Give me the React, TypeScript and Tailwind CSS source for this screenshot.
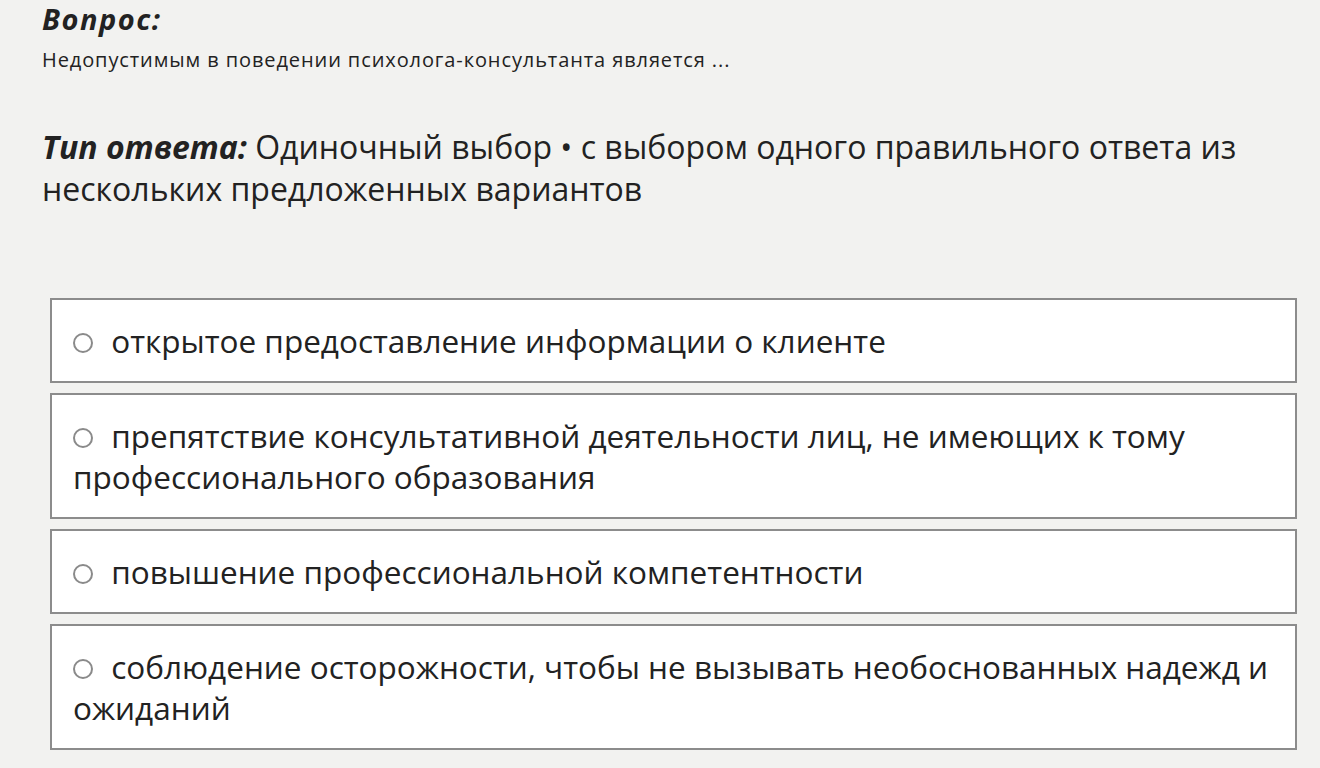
const options = [
  "открытое предоставление информации о клиенте",
  "препятствие консультативной деятельности лиц, не имеющих к тому профессионального образования",
  "повышение профессиональной компетентности",
  "соблюдение осторожности, чтобы не вызывать необоснованных надежд и ожиданий",
];

export default function App() {
  return (
    <div className="min-h-[768px] bg-[#f2f2f0] text-[#222] font-['Open_Sans','Noto_Sans',sans-serif]">
      <div className="px-[42px] pt-[1px]">
        <h1 className="text-[29px] leading-[36px] font-bold italic tracking-[1.5px]">Вопрос:</h1>
        <p className="mt-[11px] text-[20px] leading-[24px] tracking-[0.9px]">
          Недопустимым в поведении психолога-консультанта является ...
        </p>
        <p className="mt-[54px] text-[32px] leading-[42px]">
          <span className="font-bold italic">Тип ответа:</span> Одиночный выбор • с выбором одного
          правильного ответа из нескольких предложенных вариантов
        </p>
      </div>
      <div className="ml-[50px] mr-[23px] mt-[88px] flex flex-col gap-[10px]">
        {options.map((text) => (
          <label
            key={text}
            className="block border-2 border-[#8c8c8c] bg-white pl-[21px] pr-[14px] py-[20px] text-[31.5px] leading-[41px]"
          >
            <span className="mr-[10px] inline-block h-[20px] w-[20px] rounded-full border-2 border-[#8a8a8a] align-[0px]" />
            {" "}
            {text}
          </label>
        ))}
      </div>
    </div>
  );
}
